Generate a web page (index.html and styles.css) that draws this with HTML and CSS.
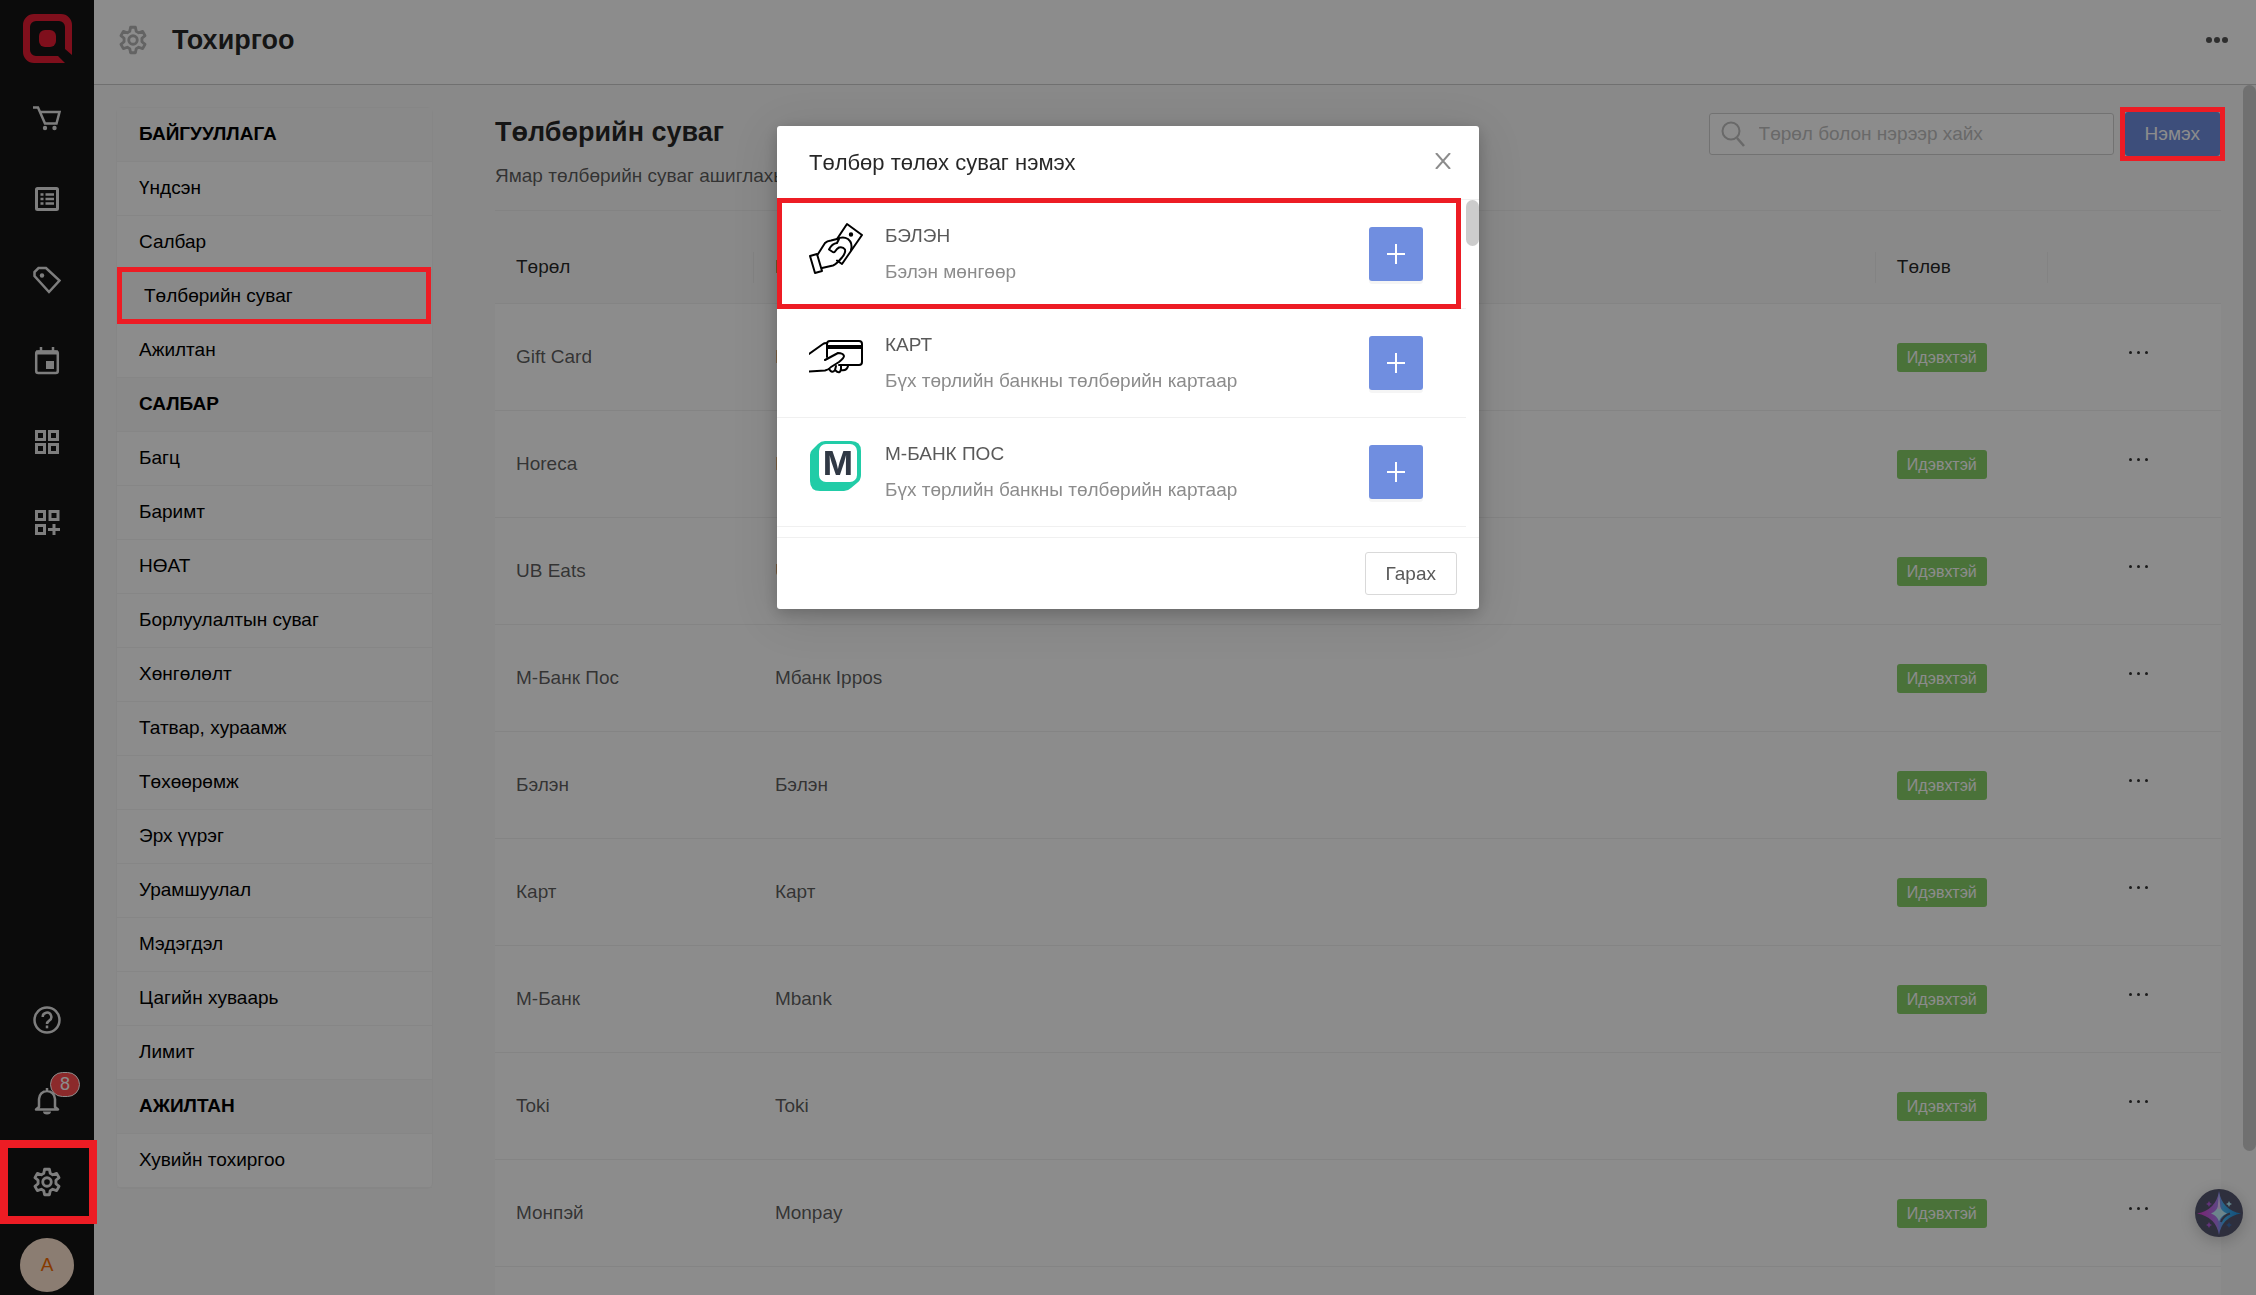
FILE: index.html
```html
<!DOCTYPE html>
<html lang="mn">

<head>
    <meta charset="UTF-8">
    <meta name="viewport" content="width=device-width, initial-scale=1.0">
    <title>Тохиргоо</title>
    <link rel="stylesheet" href="styles.css">
</head>

<body>
    <!-- Shared icons -->
    <svg class="sprite" aria-hidden="true">
        <symbol id="gear" viewBox="0 0 24 24">
            <path fill="none" stroke="currentColor" stroke-width="2" stroke-linejoin="round" d="M10.3 3h3.4l.6 2.900 1.700 1 2.800-1 1.700 3-2.200 1.900v2.400l2.200 1.900-1.700 3-2.800-1-1.700 1-.6 2.900h-3.400l-.6-2.900-1.700-1-2.800 1-1.700-3 2.200-1.900v-2.400L3.500 8.900l1.700-3 2.800 1 1.700-1z"/>
            <circle cx="12" cy="12" r="3" fill="none" stroke="currentColor" stroke-width="2"/>
        </symbol>
        <symbol id="plus" viewBox="0 0 20 20">
            <path d="M10 0v20M1 10h18" fill="none" stroke="currentColor" stroke-width="2"/>
        </symbol>
    </svg>

    <div class="app">
        <nav class="rail">
            <a href="#" class="logo" aria-label="Нүүр">
                <svg viewBox="0 0 49 49" width="49" height="49">
                    <path fill="#e81c33" fill-rule="evenodd" d="M11 0h27a11 11 0 0 1 11 11v30l-7-6V13a6 6 0 0 0-6-6H13a6 6 0 0 0-6 6v23a6 6 0 0 0 6 6h22l7 7H11A11 11 0 0 1 0 38V11A11 11 0 0 1 11 0z"/>
                    <rect x="16" y="16" width="17" height="17" rx="6" fill="#e81c33"/>
                </svg>
            </a>
            <a href="#" class="rail-item" aria-label="Борлуулалт">
                <svg viewBox="0 0 28 28" width="28" height="28" fill="none" stroke="currentColor" stroke-width="2.500">
                    <path d="M0 3.500h5l7 16h11.500l3-11.500H7"/>
                    <circle cx="12" cy="24" r="2.200" fill="currentColor" stroke="none"/>
                    <circle cx="21.500" cy="24" r="2.200" fill="currentColor" stroke="none"/>
                </svg>
            </a>
            <a href="#" class="rail-item" aria-label="Жагсаалт">
                <svg viewBox="0 0 28 28" width="28" height="28" fill="none" stroke="currentColor">
                    <rect x="3.500" y="3.500" width="21" height="21" rx="1" stroke-width="3"/>
                    <path stroke-width="2.500" d="M7.500 9.500h3M7.500 14h3M7.500 18.500h3M12.500 9.500h8.500M12.500 14h8.500M12.500 18.500h8.500"/>
                </svg>
            </a>
            <a href="#" class="rail-item" aria-label="Бараа">
                <svg viewBox="0 0 28 28" width="28" height="28" fill="none" stroke="currentColor" stroke-width="2.500">
                    <path d="M1.500 10V6l4-4h7.500l13.500 12.500L16 26z"/>
                    <circle cx="9" cy="9.500" r="2.200" fill="currentColor" stroke="none"/>
                </svg>
            </a>
            <a href="#" class="rail-item" aria-label="Захиалга">
                <svg viewBox="0 0 28 28" width="28" height="28" fill="none" stroke="currentColor" stroke-width="2.500">
                    <rect x="3.200" y="4.500" width="21.600" height="21.500" rx="2"/>
                    <path d="M3 5.500h22" stroke-width="4"/>
                    <path d="M8 0v5M20 0v5"/>
                    <rect x="13" y="14" width="8" height="8" fill="currentColor" stroke="none"/>
                </svg>
            </a>
            <a href="#" class="rail-item" aria-label="Самбар">
                <svg viewBox="0 0 28 28" width="28" height="28" fill="none" stroke="currentColor" stroke-width="3">
                    <path d="M3.500 3.500h8v8h-8zM16.500 3.500h8v8h-8zM3.500 16.500h8v8h-8zM16.500 16.500h8v8h-8z"/>
                </svg>
            </a>
            <a href="#" class="rail-item" aria-label="Нэмэлт">
                <svg viewBox="0 0 28 28" width="28" height="28" fill="none" stroke="currentColor" stroke-width="3">
                    <path d="M3.500 2.500h8v8h-8zM17 2.500h8v8h-8zM3.500 16.500h8v8h-8zM15 20.500h12M21 15v11"/>
                </svg>
            </a>

            <a href="#" class="rail-item rail-bottom" aria-label="Тусламж">
                <svg viewBox="0 0 28 28" width="28" height="28" fill="none" stroke="currentColor" stroke-width="2.500">
                    <circle cx="14" cy="14" r="12.500"/>
                    <path d="M9.700 11a4.300 4.300 0 1 1 6.500 3.600c-1.500 1-2.200 1.600-2.200 3.400"/>
                    <path d="M14 19.500v2.800"/>
                </svg>
            </a>
            <a href="#" class="rail-item" aria-label="Мэдэгдэл">
                <svg viewBox="0 0 28 28" width="28" height="28" fill="none" stroke="currentColor" stroke-width="2.500">
                    <path d="M6 20v-8a8 8 0 0 1 16 0v8l3 2.500H3zM14 1v3" stroke-linejoin="round"/>
                    <path d="M10 24.500h8a4 3 0 0 1-8 0z" fill="currentColor" stroke="none"/>
                </svg>
                <span class="badge">8</span>
            </a>
            <a href="#" class="rail-item marked-rail" aria-label="Тохиргоо">
                <svg width="34" height="34"><use href="#gear"/></svg>
            </a>
            <a href="#" class="avatar">A</a>
        </nav>

        <div class="page">
            <header class="topbar">
                <svg class="topbar-icon" width="34" height="34"><use href="#gear"/></svg>
                <h1>Тохиргоо</h1>
                <button class="more" aria-label="Цэс">
                    <svg viewBox="0 0 22 6" width="22" height="6" fill="currentColor">
                        <circle cx="3" cy="3" r="3"/><circle cx="11" cy="3" r="3"/><circle cx="19" cy="3" r="3"/>
                    </svg>
                </button>
            </header>

            <div class="content">
                <ul class="menu">
                    <li class="menu-title">БАЙГУУЛЛАГА</li>
                    <li><a href="#">Үндсэн</a></li>
                    <li><a href="#">Салбар</a></li>
                    <li class="active"><a href="#">Төлбөрийн суваг</a></li>
                    <li><a href="#">Ажилтан</a></li>
                    <li class="menu-title">САЛБАР</li>
                    <li><a href="#">Багц</a></li>
                    <li><a href="#">Баримт</a></li>
                    <li><a href="#">НӨАТ</a></li>
                    <li><a href="#">Борлуулалтын суваг</a></li>
                    <li><a href="#">Хөнгөлөлт</a></li>
                    <li><a href="#">Татвар, хураамж</a></li>
                    <li><a href="#">Төхөөрөмж</a></li>
                    <li><a href="#">Эрх үүрэг</a></li>
                    <li><a href="#">Урамшуулал</a></li>
                    <li><a href="#">Мэдэгдэл</a></li>
                    <li><a href="#">Цагийн хуваарь</a></li>
                    <li><a href="#">Лимит</a></li>
                    <li class="menu-title">АЖИЛТАН</li>
                    <li><a href="#">Хувийн тохиргоо</a></li>
                </ul>

                <main class="main">
                    <div class="main-head">
                        <div class="intro">
                            <h2>Төлбөрийн суваг</h2>
                            <p>Ямар төлбөрийн суваг ашиглахыг</p>
                        </div>
                        <label class="search">
                            <svg viewBox="0 0 24 26" width="24" height="26" fill="none" stroke="currentColor" stroke-width="2">
                                <circle cx="10" cy="10" r="8.500"/>
                                <path d="M16 17l7 8" stroke-width="2.500"/>
                            </svg>
                            <input type="text" placeholder="Төрөл болон нэрээр хайх" aria-label="Төрөл болон нэрээр хайх">
                        </label>
                        <div class="marked-add">
                            <button class="btn-add">Нэмэх</button>
                        </div>
                    </div>

                    <table class="channels">
                        <thead>
                            <tr>
                                <th class="col-type">Төрөл</th>
                                <th>Нэр</th>
                                <th class="col-status">Төлөв</th>
                                <th class="col-menu"></th>
                            </tr>
                        </thead>
                        <tbody>
                            <tr><td>Gift Card</td><td>Hor</td><td><span class="tag">Идэвхтэй</span></td><td><button class="dots" aria-label="Үйлдэл"><i></i><i></i><i></i></button></td></tr>
                            <tr><td>Horeca</td><td>Hor</td><td><span class="tag">Идэвхтэй</span></td><td><button class="dots" aria-label="Үйлдэл"><i></i><i></i><i></i></button></td></tr>
                            <tr><td>UB Eats</td><td>UB</td><td><span class="tag">Идэвхтэй</span></td><td><button class="dots" aria-label="Үйлдэл"><i></i><i></i><i></i></button></td></tr>
                            <tr><td>М-Банк Пос</td><td>Мбанк Ippos</td><td><span class="tag">Идэвхтэй</span></td><td><button class="dots" aria-label="Үйлдэл"><i></i><i></i><i></i></button></td></tr>
                            <tr><td>Бэлэн</td><td>Бэлэн</td><td><span class="tag">Идэвхтэй</span></td><td><button class="dots" aria-label="Үйлдэл"><i></i><i></i><i></i></button></td></tr>
                            <tr><td>Карт</td><td>Карт</td><td><span class="tag">Идэвхтэй</span></td><td><button class="dots" aria-label="Үйлдэл"><i></i><i></i><i></i></button></td></tr>
                            <tr><td>М-Банк</td><td>Mbank</td><td><span class="tag">Идэвхтэй</span></td><td><button class="dots" aria-label="Үйлдэл"><i></i><i></i><i></i></button></td></tr>
                            <tr><td>Toki</td><td>Toki</td><td><span class="tag">Идэвхтэй</span></td><td><button class="dots" aria-label="Үйлдэл"><i></i><i></i><i></i></button></td></tr>
                            <tr><td>Монпэй</td><td>Monpay</td><td><span class="tag">Идэвхтэй</span></td><td><button class="dots" aria-label="Үйлдэл"><i></i><i></i><i></i></button></td></tr>
                            <tr><td></td><td></td><td></td><td></td></tr>
                        </tbody>
                    </table>
                </main>
                <div class="page-scroll"></div>
            </div>
        </div>
    </div>

    <button class="assistant" aria-label="Туслах">
        <svg viewBox="0 0 48 48" width="48" height="48">
            <defs>
                <linearGradient id="star" x1="0" y1="0" x2="1" y2="0">
                    <stop offset="0" stop-color="#e23bd0"/>
                    <stop offset=".45" stop-color="#b07cf0"/>
                    <stop offset=".6" stop-color="#45b4f5"/>
                    <stop offset="1" stop-color="#1f8fe0"/>
                </linearGradient>
            </defs>
            <path fill="url(#star)" d="M24 2Q27 21 46 24.500Q27 28 24 46Q21 28 2 24.500Q21 21 24 2z"/>
            <path fill="none" stroke="#54566f" stroke-width="2" d="M26 33q2-6 9-8.500"/>
            <path fill="#c5f3ff" d="M24 15q2 7.500 8 9.500-6 2-8 8-2-6-8-8 6-2 8-9.500z"/>
            <path fill="#e9d0ff" d="M24 4l1.500 16h-3z"/>
            <path fill="#b25be0" d="M14 12l1 2 2 1-2 1-1 2-1-2-2-1 2-1zM14 33l1 2 2 1-2 1-1 2-1-2-2-1 2-1z"/>
            <path fill="#b5f0ff" d="M34 12l1 2 2 1-2 1-1 2-1-2-2-1 2-1z"/>
            <path fill="#3f6fb0" d="M34 33l1 2 2 1-2 1-1 2-1-2-2-1 2-1z"/>
        </svg>
    </button>

    <div class="mask"></div>

    <div class="modal" role="dialog" aria-labelledby="modal-title">
        <div class="modal-head">
            <h3 id="modal-title">Төлбөр төлөх суваг нэмэх</h3>
            <button class="close" aria-label="Хаах">
                <svg viewBox="0 0 16 16" width="16" height="16"><path d="M1 0l14 16M15 0L1 16" fill="none" stroke="currentColor" stroke-width="2"/></svg>
            </button>
        </div>

        <div class="modal-body">
            <ul class="options">
                <li class="option marked">
                    <svg viewBox="0 0 54 54" width="54" height="54" fill="none" stroke="#000" stroke-width="2" stroke-linejoin="round" stroke-linecap="round">
                        <path d="M1 34l7-2 5 17-7 2z"/>
                        <path d="M9 32l7-11q2-2 6-2.500l6-1.500L38 2l15 11-20 29-5-3.500"/>
                        <path d="M13 46l11-2.500q3-1 9-8 4-5 3-8-2-3-6-2-2 1-4 4-1 1.500-3 0l-3-2q3-6 8-6.500l2-4"/>
                        <path d="M28 17q6-3 11 0 5 4 3 11"/>
                        <circle cx="42" cy="12.500" r="1.200" fill="#000"/>
                    </svg>
                    <div class="option-text">
                        <h4>БЭЛЭН</h4>
                        <p>Бэлэн мөнгөөр</p>
                    </div>
                    <button class="btn-plus" aria-label="Нэмэх"><svg width="20" height="20"><use href="#plus"/></svg></button>
                </li>
                <li class="option">
                    <svg viewBox="0 0 54 54" width="54" height="54" fill="none" stroke="#000" stroke-width="2" stroke-linejoin="round" stroke-linecap="round">
                        <path d="M18 26V13q0-3 3-3h29q3 0 3 3v18q0 3-3 3H30"/>
                        <path d="M18 16h35" stroke-width="4" stroke-linecap="butt"/>
                        <path d="M0 23L14 13q1-1 4-1M0 40.500l16-1q4-1 6-3.500l8-5q5-4 5-6-1-3-6-3l-13 7"/>
                        <path d="M20 38q3 5 6 1l1-4M26 39q5 5 6-1v-3M32 39q6 1 7-4"/>
                    </svg>
                    <div class="option-text">
                        <h4>КАРТ</h4>
                        <p>Бүх төрлийн банкны төлбөрийн картаар</p>
                    </div>
                    <button class="btn-plus" aria-label="Нэмэх"><svg width="20" height="20"><use href="#plus"/></svg></button>
                </li>
                <li class="option">
                    <svg viewBox="0 0 54 54" width="54" height="54">
                        <path fill="#21cca7" d="M16 1h26q10 0 10 10v24q0 5-4 8l-6 5q-3 3-7 3H11Q1 51 1 41V15q0-3 2-5l6-6q3-3 7-3z"/>
                        <rect x="10" y="4" width="38" height="38" rx="7" fill="#fff"/>
                        <text x="29" y="35" text-anchor="middle" class="mbank-letter">M</text>
                    </svg>
                    <div class="option-text">
                        <h4>М-БАНК ПОС</h4>
                        <p>Бүх төрлийн банкны төлбөрийн картаар</p>
                    </div>
                    <button class="btn-plus" aria-label="Нэмэх"><svg width="20" height="20"><use href="#plus"/></svg></button>
                </li>
            </ul>
            <div class="modal-scroll"></div>
        </div>

        <div class="modal-foot">
            <button class="btn-exit">Гарах</button>
        </div>
    </div>
</body>

</html>
```
FILE: styles.css
```css
* {
    box-sizing: border-box;
    margin: 0;
    padding: 0;
}

body {
    height: 100vh;
    overflow: hidden;
    background: #fafafa;
    color: rgba(0, 0, 0, 0.65);
    font-family: "Liberation Sans", Arial, sans-serif;
    font-size: 19px;
    line-height: 28px;
}

button,
input {
    font: inherit;
    color: inherit;
    background: none;
    border: none;
}

button {
    cursor: pointer;
}

a {
    color: inherit;
    text-decoration: none;
}

ul {
    list-style: none;
}

svg {
    display: block;
    flex-shrink: 0;
}

.sprite {
    position: absolute;
    width: 0;
    height: 0;
}

.app {
    display: flex;
    height: 100vh;
}

/* Left icon rail */
.rail {
    display: flex;
    flex-direction: column;
    align-items: center;
    flex: 0 0 94px;
    padding-bottom: 3px;
    background: #141414;
    color: #e6e6e6;
}

.logo {
    height: 77px;
    padding-top: 14px;
}

.rail-item {
    position: relative;
    display: flex;
    align-items: center;
    justify-content: center;
    width: 94px;
    height: 81px;
    flex-shrink: 0;
}

.rail-bottom {
    margin-top: auto;
}

.badge {
    position: absolute;
    top: 12px;
    left: 50px;
    width: 30px;
    height: 25px;
    border: 1px solid #fff;
    border-radius: 13px;
    background: #ff4d4f;
    color: #fff;
    font-size: 18px;
    line-height: 22px;
    text-align: center;
}

.marked-rail::after {
    content: "";
    position: absolute;
    z-index: 20;
    inset: -1px -3px -2px 0;
    border: 8px solid #ed1c24;
}

.avatar {
    width: 54px;
    height: 54px;
    flex-shrink: 0;
    margin-top: 16px;
    border-radius: 50%;
    background: #fde3cf;
    color: #f56a00;
    line-height: 54px;
    text-align: center;
}

/* Page */
.page {
    display: flex;
    flex-direction: column;
    flex: 1;
    min-width: 0;
}

.topbar {
    display: flex;
    align-items: center;
    height: 85px;
    flex-shrink: 0;
    padding: 0 28px 4px 22px;
    border-bottom: 1px solid #ccc;
    background: #fff;
}

.topbar-icon {
    margin-right: 22px;
    color: #b4b4b4;
}

h1,
h2 {
    color: rgba(0, 0, 0, 0.85);
    font-size: 27px;
    line-height: 36px;
}

.more {
    margin-left: auto;
    color: #555;
}

.content {
    position: relative;
    display: flex;
    align-items: flex-start;
    gap: 62px;
    flex: 1;
    min-height: 0;
    padding: 22px 35px 0 22px;
}

.menu {
    flex: 0 0 317px;
    border: 1px solid #f5f5f5;
    border-radius: 6px;
    background: #fff;
    color: #000;
}

.menu li {
    height: 54px;
    padding-left: 22px;
    border-bottom: 1px solid #f5f5f5;
    line-height: 52px;
}

.menu .menu-title {
    background: #fafafa;
    font-weight: bold;
}

.menu a {
    display: block;
}

.menu .active {
    position: relative;
    padding-left: 27px;
    background: #fafafa;
}

.menu .active::after {
    content: "";
    position: absolute;
    z-index: 20;
    inset: -3px 1px -1px 0;
    border: 5px solid #ed1c24;
}

.main {
    flex: 1;
    min-width: 0;
}

.main-head {
    display: flex;
    align-items: flex-start;
    height: 104px;
    margin-bottom: 20px;
    border-bottom: 1px solid #eee;
}

.intro {
    flex: 1;
    padding-top: 7px;
}

.intro p {
    margin-top: 12px;
}

.search {
    display: flex;
    align-items: center;
    gap: 14px;
    width: 405px;
    height: 42px;
    margin: 6px 6px 0 0;
    padding: 0 11px;
    border: 1px solid #d0d0d0;
    border-radius: 3px;
    background: #fff;
    color: #bfbfbf;
}

.search input {
    flex: 1;
    min-width: 0;
    outline: none;
}

.search input::placeholder {
    color: #bfbfbf;
}

.marked-add {
    position: relative;
    margin-right: -4px;
    padding: 5px;
}

.marked-add::after {
    content: "";
    position: absolute;
    z-index: 20;
    inset: 0;
    border: 5px solid #ed1c24;
    pointer-events: none;
}

.btn-add {
    display: block;
    height: 44px;
    padding: 0 20px;
    border-radius: 3px;
    background: #708ee0;
    color: #fff;
}

/* Table */
.channels {
    width: 100%;
    border-collapse: separate;
    border-spacing: 0;
    table-layout: fixed;
    background: #fff;
}

.channels th {
    position: relative;
    height: 73px;
    padding: 0 21px;
    border-bottom: 1px solid #f0f0f0;
    background: #fafafa;
    color: rgba(0, 0, 0, 0.85);
    font-weight: normal;
    text-align: left;
}

.channels th:not(:last-child)::after {
    content: "";
    position: absolute;
    top: 21px;
    right: 0;
    width: 1px;
    height: 31px;
    background: #eee;
}

.channels td {
    height: 107px;
    padding: 0 21px;
    border-bottom: 1px solid #f0f0f0;
}

.col-type {
    width: 15%;
}

.col-status,
.col-menu {
    width: 10%;
}

.tag {
    display: block;
    width: fit-content;
    padding: 0 10px;
    border-radius: 3px;
    background: #87d068;
    color: #fff;
    font-size: 16px;
    line-height: 29px;
}

.dots {
    display: flex;
    gap: 5px;
    margin: 0 auto;
    padding: 2px 0 12px 8px;
}

.dots i {
    width: 3px;
    height: 3px;
    border-radius: 50%;
    background: #333;
}

.page-scroll {
    position: absolute;
    top: 0;
    right: 0;
    width: 13px;
    height: 1066px;
    border-radius: 7px;
    background: #cdcdcd;
}

.assistant {
    position: absolute;
    right: 13px;
    bottom: 58px;
    width: 48px;
    height: 48px;
    border-radius: 50%;
    background: #54566f;
    box-shadow: 0 4px 16px rgba(0, 0, 0, 0.2);
}

/* Overlay and dialog */
.mask {
    position: fixed;
    z-index: 10;
    inset: 0;
    background: rgba(0, 0, 0, 0.45);
}

.modal {
    position: absolute;
    z-index: 30;
    top: 126px;
    left: 0;
    right: 0;
    width: 702px;
    margin: 0 auto;
    border-radius: 3px;
    background: #fff;
    box-shadow: 0 4px 16px rgba(0, 0, 0, 0.2), 0 8px 48px rgba(0, 0, 0, 0.12);
}

.modal-head {
    display: flex;
    align-items: center;
    justify-content: space-between;
    height: 74px;
    padding: 0 28px 0 32px;
    border-bottom: 1px solid #f0f0f0;
}

.modal-head h3 {
    color: rgba(0, 0, 0, 0.85);
    font-size: 22px;
    font-weight: normal;
}

.close {
    padding-bottom: 4px;
    color: #8c8c8c;
}

.modal-body {
    position: relative;
    height: 337px;
    padding-right: 13px;
}

.option {
    position: relative;
    display: flex;
    align-items: center;
    height: 109px;
    padding: 0 43px 0 32px;
    border-bottom: 1px solid #f0f0f0;
}

.option > svg {
    margin-top: -10px;
}

.marked::after {
    content: "";
    position: absolute;
    inset: -2px 5px -1px 0;
    border: 5px solid #ed1c24;
    pointer-events: none;
}

.option-text {
    flex: 1;
    padding-left: 22px;
}

.option-text h4 {
    margin-bottom: 8px;
    color: #595959;
    font-size: 19px;
    font-weight: normal;
}

.option-text p {
    color: #8c8c8c;
}

.mbank-letter {
    fill: #303844;
    font-family: Inter, sans-serif;
    font-size: 32px;
    font-weight: bold;
}

.btn-plus {
    display: flex;
    align-items: center;
    justify-content: center;
    width: 54px;
    height: 54px;
    border-radius: 3px;
    background: #708ee0;
    box-shadow: 0 3px 0 rgba(0, 0, 0, 0.04);
    color: #fff;
}

.modal-scroll {
    position: absolute;
    top: 0;
    right: 0;
    width: 13px;
    height: 46px;
    border-radius: 7px;
    background: #ccc;
}

.modal-foot {
    display: flex;
    justify-content: flex-end;
    padding: 14px 22px;
    border-top: 1px solid #f0f0f0;
}

.btn-exit {
    height: 43px;
    padding: 0 20px;
    border: 1px solid #d9d9d9;
    border-radius: 3px;
    color: #595959;
}
```
